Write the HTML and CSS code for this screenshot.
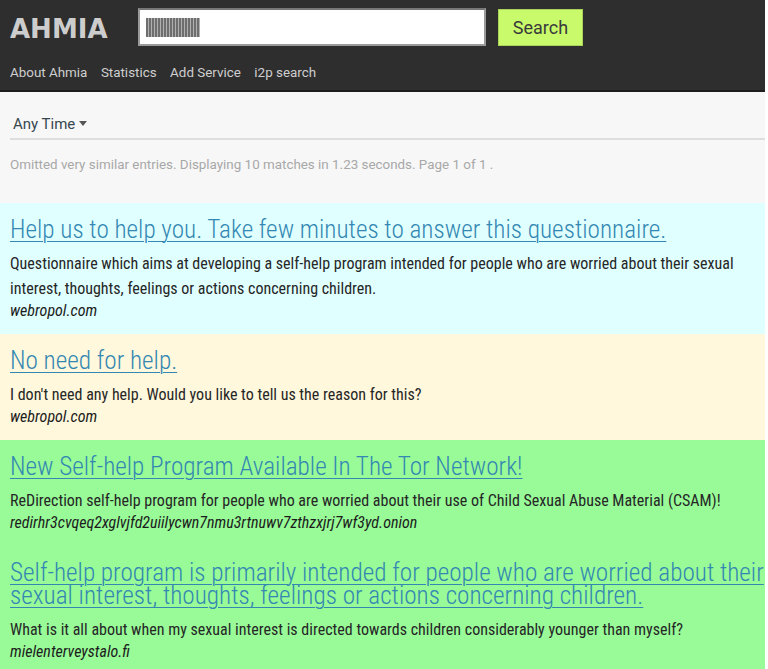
FILE: index.html
```html
<!DOCTYPE html>
<html>
<head>
<meta charset="utf-8">
<link rel="stylesheet" href="styles.css">
</head>
<body>
<div class="page">
  <header class="header">
    <div class="top-row">
      <div class="logo">AHMIA</div>
      <div class="search-box"><span class="redacted"></span></div>
      <button class="search-btn">Search</button>
    </div>
    <nav class="nav">
      <a>About Ahmia</a>
      <a>Statistics</a>
      <a>Add Service</a>
      <a>i2p search</a>
    </nav>
  </header>
  <div class="filters">
    <div class="any-time">Any Time <span class="caret"></span></div>
  </div>
  <div class="info">Omitted very similar entries. Displaying 10 matches in 1.23 seconds. Page 1 of 1 .</div>
  <div class="results">
    <div class="result cyan">
      <a class="title">Help us to help you. Take few minutes to answer this questionnaire.</a>
      <p class="desc">Questionnaire which aims at developing a self-help program intended for people who are worried about their sexual interest, thoughts, feelings or actions concerning children.</p>
      <div class="url">webropol.com</div>
    </div>
    <div class="result cream">
      <a class="title">No need for help.</a>
      <p class="desc">I don't need any help. Would you like to tell us the reason for this?</p>
      <div class="url">webropol.com</div>
    </div>
    <div class="result green">
      <a class="title">New Self-help Program Available In The Tor Network!</a>
      <p class="desc">ReDirection self-help program for people who are worried about their use of Child Sexual Abuse Material (CSAM)!</p>
      <div class="url">redirhr3cvqeq2xglvjfd2uiilycwn7nmu3rtnuwv7zthzxjrj7wf3yd.onion</div>
    </div>
    <div class="result green">
      <a class="title">Self-help program is primarily intended for people who are worried about their sexual interest, thoughts, feelings or actions concerning children.</a>
      <p class="desc">What is it all about when my sexual interest is directed towards children considerably younger than myself?</p>
      <div class="url">mielenterveystalo.fi</div>
    </div>
  </div>
</div>
</body>
</html>
```
FILE: styles.css
```css
html, body {
  margin: 0;
  padding: 0;
  background: #ffffff;
  font-family: Roboto, "Liberation Sans", sans-serif;
}
.page {
  width: 765px;
  min-height: 669px;
  background: #f7f7f7;
}
.header {
  background: #2e2e2e;
  border-bottom: 2px solid #1e1e1e;
  height: 90px;
  box-sizing: content-box;
}
.top-row {
  display: flex;
  align-items: flex-start;
  padding-top: 8px;
}
.logo {
  font-family: "DejaVu Sans", sans-serif;
  font-weight: bold;
  font-size: 26px;
  color: #cdcdcd;
  margin-left: 10px;
  margin-top: 8px;
  width: 128px;
  line-height: 26px;
}
.search-box {
  width: 338px;
  height: 34px;
  background: #fff;
  border: 2px solid #9a9a9a;
  border-top-color: #777;
  display: flex;
  align-items: center;
  padding-left: 6px;
  box-sizing: content-box;
  margin-right: 12px;
}
.redacted {
  display: block;
  width: 54px;
  height: 19px;
  background: repeating-linear-gradient(90deg, #6e6e6e 0 2px, #b0b0b0 2px 3px);
}
.search-btn {
  margin-top: 1px;
  width: 85px;
  height: 37px;
  background: #c8fa6c;
  border: 1px solid #a9d25a;
  font-family: Roboto, sans-serif;
  font-size: 18px;
  color: #3a3a3a;
  padding: 0;
}
.nav {
  display: flex;
  gap: 13.5px;
  padding-left: 10px;
  margin-top: 19px;
}
.nav a {
  font-size: 13.4px;
  color: #cfcfcf;
  line-height: 16px;
}
.filters {
  margin-left: 10px;
  border-bottom: 2px solid #dedede;
  height: 46px;
  display: flex;
  align-items: flex-end;
}
.any-time {
  font-size: 15px;
  color: #37474f;
  padding-left: 3px;
  margin-bottom: 5px;
}
.caret {
  display: inline-block;
  width: 0;
  height: 0;
  border-left: 4px solid transparent;
  border-right: 4px solid transparent;
  border-top: 5px solid #555;
  vertical-align: 3px;
  margin-left: 0;
}
.info {
  font-size: 13.4px;
  color: #a8a8a8;
  padding: 17px 10px 0;
  height: 63px;
  box-sizing: border-box;
  line-height: 16px;
}
.result {
  padding: 15px 0 13px 10px;
}
.cyan { background: #e0ffff; }
.cream { background: #fff8dc; }
.green { background: #98fb98; }
.title {
  display: block;
  font-family: "Roboto Condensed", "Liberation Sans Narrow", Roboto, sans-serif;
  font-weight: 300;
  font-size: 25.2px;
  line-height: 23px;
  color: #3387b2;
  text-decoration: underline;
  text-underline-offset: 3px;
  text-decoration-thickness: 1px;
}
.desc {
  margin: 10px 0 0;
  font-family: "Roboto Condensed", "Liberation Sans Narrow", Roboto, sans-serif;
  font-size: 16px;
  line-height: 25px;
  color: #262626;
}
.url {
  font-family: "Roboto Condensed", "Liberation Sans Narrow", Roboto, sans-serif;
  font-style: italic;
  font-size: 16px;
  line-height: 20px;
  color: #1c1c1c;
}
```
